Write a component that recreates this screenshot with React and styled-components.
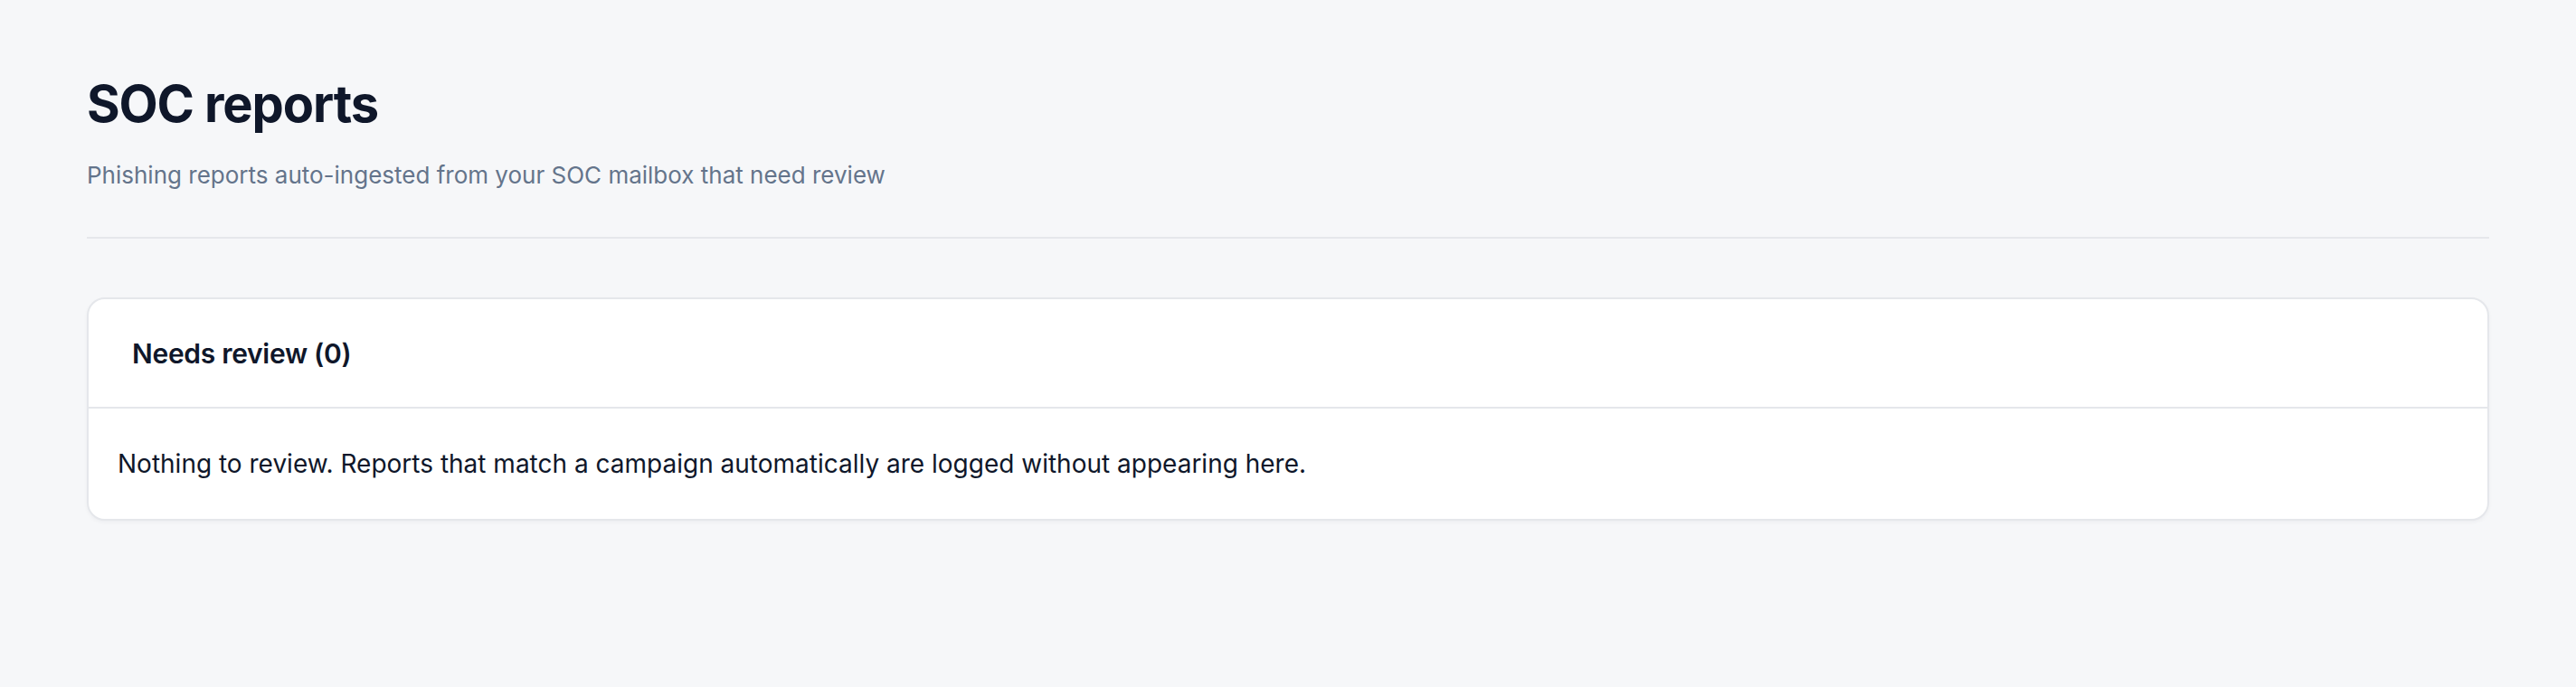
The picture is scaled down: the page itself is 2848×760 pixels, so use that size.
import React from "react";
import styled, { createGlobalStyle } from "styled-components";

const Global = createGlobalStyle`
  html, body { margin: 0; padding: 0; background: #f6f7f9; }
  body { font-family: Inter, "Noto Sans", sans-serif; color: #0f172a; }
  * { box-sizing: border-box; }
`;

const Page = styled.main`
  min-height: 760px;
  padding: 80px 96px;
  background: #f6f7f9;
`;

const Header = styled.header`
  padding-bottom: 48px;
  border-bottom: 2px solid #e5e7eb;
`;

const Title = styled.h1`
  margin: 0;
  font-size: 56px;
  line-height: 70px;
  font-weight: 700;
  letter-spacing: -0.02em;
  color: #0f172a;
`;

const Subtitle = styled.p`
  margin: 24px 0 0;
  font-size: 26px;
  line-height: 40px;
  color: #64748b;
`;

const Card = styled.section`
  margin-top: 65px;
  background: #ffffff;
  border: 2px solid #e5e7eb;
  border-radius: 20px;
  box-shadow: 0 2px 4px rgba(15, 23, 42, 0.04);
  overflow: hidden;
`;

const CardHeader = styled.div`
  padding: 40px 48px 39px;
  border-bottom: 2px solid #e5e7eb;
`;

const CardTitle = styled.h2`
  margin: 0;
  font-size: 30px;
  line-height: 40px;
  font-weight: 600;
  letter-spacing: -0.3px;
  color: #0f172a;
`;

const CardBody = styled.div`
  padding: 40px 32px 40px;
  font-size: 28px;
  line-height: 42px;
  color: #0f172a;
`;

export default function App() {
  return (
    <>
      <Global />
      <Page>
        <Header>
          <Title>SOC reports</Title>
          <Subtitle>Phishing reports auto-ingested from your SOC mailbox that need review</Subtitle>
        </Header>
        <Card>
          <CardHeader>
            <CardTitle>Needs review (0)</CardTitle>
          </CardHeader>
          <CardBody>
            Nothing to review. Reports that match a campaign automatically are logged without appearing here.
          </CardBody>
        </Card>
      </Page>
    </>
  );
}
